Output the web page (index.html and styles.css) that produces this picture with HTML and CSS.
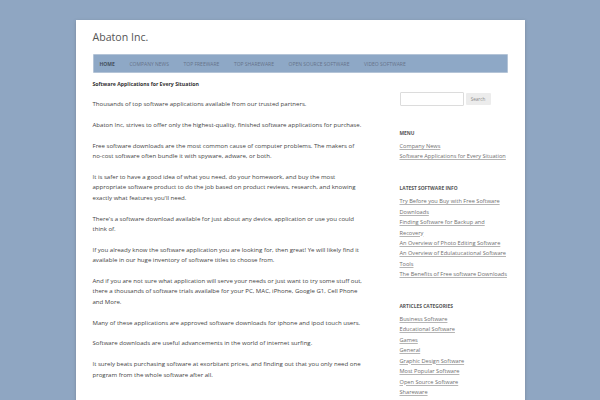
FILE: index.html
```html
<!DOCTYPE html>
<html>
<head>
<meta charset="utf-8">
<link rel="stylesheet" href="styles.css">
</head>
<body>
<div class="page">
  <header class="site-header">
    <div class="site-title">Abaton Inc.</div>
  </header>
  <nav class="main-nav">
    <a class="current">Home</a>
    <a>Company News</a>
    <a>Top Freeware</a>
    <a>Top Shareware</a>
    <a>Open Source Software</a>
    <a>Video Software</a>
  </nav>
  <div class="main">
    <div class="content">
      <h1 class="entry-title">Software Applications for Every Situation</h1>
      <p>Thousands of top software applications available from our trusted partners.</p>
      <p>Abaton Inc, strives to offer only the highest-quality, finished software applications for purchase.</p>
      <p>Free software downloads are the most common cause of computer problems. The makers of no-cost software often bundle it with spyware, adware, or both.</p>
      <p>It is safer to have a good idea of what you need, do your homework, and buy the most appropriate software product to do the job based on product reviews, research, and knowing exactly what features you'll need.</p>
      <p>There's a software download available for just about any device, application or use you could think of.</p>
      <p>If you already know the software application you are looking for, then great! Ye will likely find it available in our huge inventory of software titles to choose from.</p>
      <p>And if you are not sure what application will serve your needs or just want to try some stuff out, there a thousands of software trials availalbe for your PC, MAC, iPhone, Google G1, Cell Phone and More.</p>
      <p>Many of these applications are approved software downloads for iphone and ipod touch users.</p>
      <p>Software downloads are useful advancements in the world of internet surfing.</p>
      <p>It surely beats purchasing software at exorbitant prices, and finding out that you only need one program from the whole software after all.</p>
    </div>
    <aside class="sidebar">
      <div class="search">
        <span class="search-input"></span>
        <span class="search-btn">Search</span>
      </div>
      <div class="widget">
        <h3 class="widget-title">Menu</h3>
        <ul>
          <li><a>Company News</a></li>
          <li><a>Software Applications for Every Situation</a></li>
        </ul>
      </div>
      <div class="widget">
        <h3 class="widget-title">Latest Software Info</h3>
        <ul>
          <li><a>Try Before you Buy with Free Software Downloads</a></li>
          <li><a>Finding Software for Backup and Recovery</a></li>
          <li><a>An Overview of Photo Editing Software</a></li>
          <li><a>An Overview of Edulatucational Software Tools</a></li>
          <li><a>The Benefits of Free software Downloads</a></li>
        </ul>
      </div>
      <div class="widget">
        <h3 class="widget-title">Articles Categories</h3>
        <ul>
          <li><a>Business Software</a></li>
          <li><a>Educational Software</a></li>
          <li><a>Games</a></li>
          <li><a>General</a></li>
          <li><a>Graphic Design Software</a></li>
          <li><a>Most Popular Software</a></li>
          <li><a>Open Source Software</a></li>
          <li><a>Shareware</a></li>
          <li><a>Top Freeware</a></li>
        </ul>
      </div>
    </aside>
  </div>
</div>
</body>
</html>
```

FILE: styles.css
```css
html, body {
  margin: 0;
  padding: 0;
}
body {
  background: #8fa6c2;
  font-family: "Open Sans", "Liberation Sans", sans-serif;
  color: #444;
  overflow: hidden;
}
.page {
  width: 415px;
  padding: 0 17px;
  margin: 20px auto 0;
  background: #fff;
  min-height: 400px;
  box-shadow: 0 1px 3px rgba(80, 80, 80, 0.35);
}
.site-header {
  padding-top: 10px;
  margin-bottom: 10px;
}
.site-title {
  font-size: 10.6px;
  line-height: 14px;
  color: #555;
}
.main-nav {
  height: 19px;
  background: #8ea8c6;
  display: flex;
  align-items: center;
  padding-left: 7px;
  gap: 14.6px;
  box-shadow: 0 0 0 0.5px #d9dfe8 inset;
}
.main-nav a {
  font-size: 5px;
  text-transform: uppercase;
  color: #66738a;
}
.main-nav a.current {
  font-weight: bold;
  color: #45505e;
}
.main {
  display: flex;
  align-items: flex-start;
  margin-top: 6px;
}
.content {
  width: 270px;
  font-size: 6.07px;
  line-height: 10.4px;
  color: #3f3f3f;
}
.entry-title {
  font-size: 5.2px;
  font-weight: bold;
  line-height: 10.4px;
  margin: 0 0 9.8px;
  color: #333;
}
.content p {
  margin: 0 0 10.4px;
}
.sidebar {
  width: 108px;
  margin-left: 37px;
  padding-top: 13px;
}
.search {
  display: flex;
  align-items: center;
  gap: 2px;
  height: 14px;
  margin-bottom: 22px;
}
.search-input {
  width: 62px;
  height: 12px;
  border: 1px solid #dcdcdc;
  border-radius: 1px;
  background: #fff;
}
.search-btn {
  width: 25px;
  height: 12px;
  background: #ececec;
  border-radius: 1px;
  font-size: 4.6px;
  color: #8a8a8a;
  display: flex;
  align-items: center;
  justify-content: center;
}
.widget {
  margin-bottom: 21.5px;
}
.widget-title {
  font-size: 4.9px;
  font-weight: bold;
  text-transform: uppercase;
  line-height: 10.4px;
  margin: 0 0 2.6px;
  color: #555;
}
.widget ul {
  list-style: none;
  margin: 0;
  padding: 0;
}
.widget li {
  font-size: 5.63px;
  line-height: 10.4px;
}
.widget li a {
  color: #6f6f6f;
  text-decoration: underline;
  text-decoration-color: #b5b5b5;
}
```
